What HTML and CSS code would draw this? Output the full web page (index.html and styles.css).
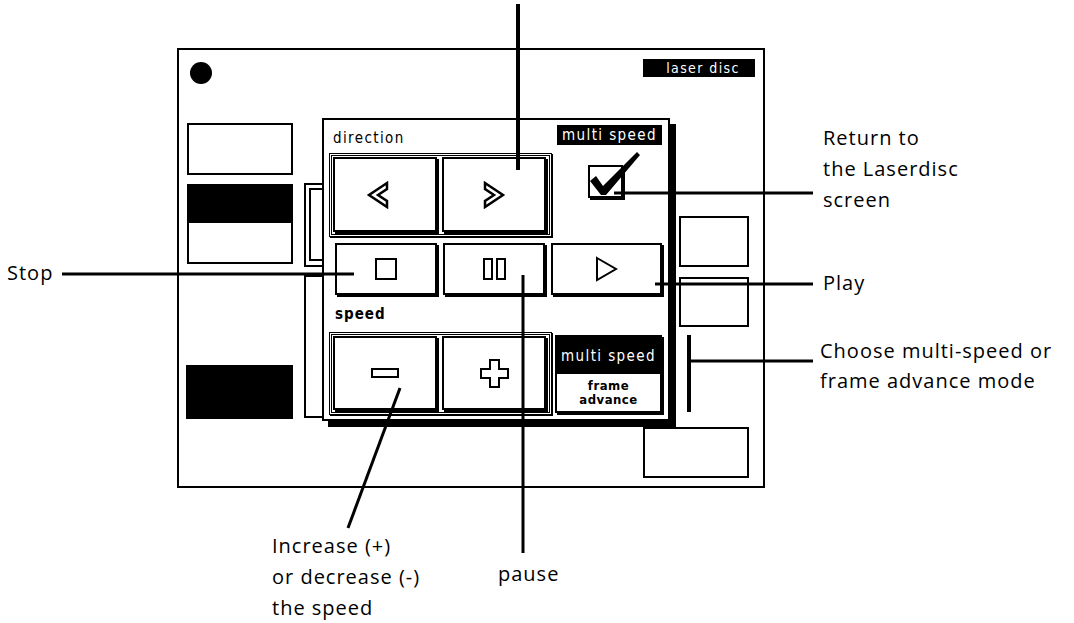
FILE: index.html
```html
<!DOCTYPE html>
<html lang="en">
<head>
    <meta charset="UTF-8">
    <title>Laserdisc controls</title>
    <link rel="stylesheet" href="styles.css">
</head>
<body>
    <div class="figure">
        <div class="screen">
            <div class="dot"></div>
            <div class="tag">laser disc</div>

            <div class="slot slot-a"></div>
            <div class="slot slot-b"></div>
            <div class="slot slot-c"></div>
            <div class="slot slot-d"></div>
            <div class="slot slot-e"></div>
            <div class="slot slot-f"></div>

            <div class="backwin backwin-upper"><div class="backwin-inner"></div></div>
            <div class="backwin backwin-lower"></div>

            <div class="panel">
                <div class="panel-head">
                    <span class="caption">direction</span>
                    <span class="badge">multi speed</span>
                </div>

                <div class="panel-row">
                    <div class="group">
                        <div class="key">
                            <svg class="icon-back" width="24" height="28" viewBox="0 0 24 28"><path d="M21 2 L3 14 L21 26 L21 20 L12 14 L21 8 Z" fill="#fff" stroke="#000" stroke-width="2.5"/></svg>
                        </div>
                        <div class="key">
                            <svg width="24" height="28" viewBox="0 0 24 28"><path d="M3 2 L21 14 L3 26 L3 20 L12 14 L3 8 Z" fill="#fff" stroke="#000" stroke-width="2.5"/></svg>
                        </div>
                    </div>
                    <div class="check-cell">
                        <div class="checkbox">
                            <svg class="checkmark" width="56" height="50" viewBox="0 -15 56 50"><polygon points="2,16 8,11 15,21 49,-13 52,-10 18,30 13,30" fill="#000"/></svg>
                        </div>
                    </div>
                </div>

                <div class="transport">
                    <div class="key">
                        <svg width="22" height="22" viewBox="0 0 22 22"><rect x="1" y="1" width="20" height="20" fill="none" stroke="#000" stroke-width="2"/></svg>
                    </div>
                    <div class="key">
                        <svg width="23" height="22" viewBox="0 0 23 22"><rect x="1" y="1" width="8" height="20" fill="none" stroke="#000" stroke-width="2"/><rect x="14" y="1" width="8" height="20" fill="none" stroke="#000" stroke-width="2"/></svg>
                    </div>
                    <div class="key key-wide">
                        <svg width="23" height="26" viewBox="0 0 23 26"><path d="M2 2 L21 13 L2 24 Z" fill="none" stroke="#000" stroke-width="2"/></svg>
                    </div>
                </div>

                <div class="speed-caption">speed</div>

                <div class="panel-row">
                    <div class="group group-speed">
                        <div class="key">
                            <svg width="28" height="10" viewBox="0 0 28 10"><rect x="1" y="1" width="26" height="8" fill="none" stroke="#000" stroke-width="2"/></svg>
                        </div>
                        <div class="key">
                            <svg width="29" height="29" viewBox="0 0 29 29"><path d="M10 1 H19 V10 H28 V19 H19 V28 H10 V19 H1 V10 H10 Z" fill="none" stroke="#000" stroke-width="2"/></svg>
                        </div>
                    </div>
                    <div class="mode">
                        <div class="mode-on">multi speed</div>
                        <div class="mode-off">frame<br>advance</div>
                    </div>
                </div>
            </div>
        </div>

        <svg class="leaders" width="1074" height="623" viewBox="0 0 1074 623">
            <g stroke="#000" fill="none">
                <path d="M518 4 V170" stroke-width="4"/>
                <path d="M614 193 H813" stroke-width="3"/>
                <path d="M62 274 H354" stroke-width="3"/>
                <path d="M655 284 H813" stroke-width="3"/>
                <path d="M689 335 V412" stroke-width="4"/>
                <path d="M690 361 H813" stroke-width="3"/>
                <path d="M523 275 V553" stroke-width="3"/>
                <path d="M400 388 L348 528" stroke-width="3"/>
            </g>
        </svg>

        <div class="note note-stop">Stop</div>
        <div class="note note-return">Return to<br>the Laserdisc<br>screen</div>
        <div class="note note-play">Play</div>
        <div class="note note-mode">Choose multi-speed or<br>frame advance mode</div>
        <div class="note note-speed">Increase (+)<br>or decrease (-)<br>the speed</div>
        <div class="note note-pause">pause</div>
    </div>
</body>
</html>
```

FILE: styles.css
```css
body {
    margin: 0;
    background-color: #fff;
}
.figure {
    position: relative;
    width: 1074px;
    height: 623px;
    overflow: hidden;
    color: #000;
    font-family: "Open Sans", "DejaVu Sans", sans-serif;
}
.screen {
    position: relative;
    box-sizing: border-box;
    width: 588px;
    height: 440px;
    margin: 48px 0 0 177px;
    border: 2px solid #000;
    font-family: "DejaVu Sans Condensed", "DejaVu Sans Mono", monospace;
    font-size: 15px;
    letter-spacing: 1.4px;
}
.dot {
    position: absolute;
    left: 11px;
    top: 12px;
    width: 22px;
    height: 22px;
    border-radius: 50%;
    background-color: #000;
}
.tag {
    position: absolute;
    left: 464px;
    top: 9px;
    width: 112px;
    height: 18px;
    box-sizing: border-box;
    padding-left: 8px;
    background-color: #000;
    color: #fff;
    font-size: 14px;
    line-height: 18px;
    text-align: center;
}
.slot {
    position: absolute;
    box-sizing: border-box;
    border: 2px solid #000;
    background-color: #fff;
}
.slot-a { left: 8px; top: 73px; width: 106px; height: 52px; }
.slot-b { left: 8px; top: 134px; width: 106px; height: 80px; background: linear-gradient(#000 0 37px, #fff 37px); }
.slot-c { left: 7px; top: 315px; width: 107px; height: 54px; background-color: #000; }
.slot-d { left: 500px; top: 166px; width: 70px; height: 51px; }
.slot-e { left: 500px; top: 227px; width: 70px; height: 50px; }
.slot-f { left: 464px; top: 377px; width: 106px; height: 51px; }
.backwin {
    position: absolute;
    box-sizing: border-box;
    left: 125px;
    width: 50px;
    border: 2px solid #000;
    background-color: #fff;
}
.backwin-upper {
    top: 133px;
    height: 84px;
    padding: 3px 0 4px 3px;
}
.backwin-inner {
    height: 100%;
    box-sizing: border-box;
    border: 2px solid #000;
}
.backwin-lower {
    top: 225px;
    height: 143px;
}
.panel {
    position: absolute;
    left: 143px;
    top: 68px;
    width: 348px;
    height: 303px;
    box-sizing: border-box;
    padding: 5px 6px 0 5px;
    border: 2px solid #000;
    box-shadow: 6px 6px 0 #000;
    background-color: #fff;
    display: flex;
    flex-direction: column;
}
.panel-head {
    display: flex;
    justify-content: space-between;
    height: 28px;
}
.caption {
    margin: 5px 0 0 4px;
    line-height: 16px;
}
.badge {
    width: 105px;
    height: 20px;
    line-height: 20px;
    text-align: center;
    background-color: #000;
    color: #fff;
}
.panel-row {
    display: flex;
}
.group {
    display: flex;
    gap: 5px;
    padding: 1px 3px 2px 1px;
    border: 3px double #000;
    box-shadow: 1px 1px 0 #000;
}
.key {
    box-sizing: border-box;
    width: 104px;
    height: 75px;
    border: 2px solid #000;
    box-shadow: 2px 2px 0 #000;
    background-color: #fff;
    display: flex;
    align-items: center;
    justify-content: center;
}
.icon-back {
    margin-right: 14px;
}
.group-speed .key {
    height: 74px;
}
.check-cell {
    flex: 1;
}
.checkbox {
    position: relative;
    box-sizing: border-box;
    width: 35px;
    height: 33px;
    margin: 12px 0 0 36px;
    border: 2px solid #000;
    box-shadow: 2px 2px 0 #000;
}
.checkmark {
    position: absolute;
    left: -2px;
    top: -17px;
    overflow: visible;
}
.transport {
    display: flex;
    gap: 6px;
    margin: 6px 0 0 6px;
}
.transport .key {
    width: 102px;
    height: 52px;
}
.transport .key-wide {
    width: 111px;
}
.speed-caption {
    height: 37px;
    box-sizing: border-box;
    padding: 11px 0 0 6px;
    font-weight: bold;
    line-height: 16px;
    letter-spacing: 1px;
}
.mode {
    box-sizing: border-box;
    width: 107px;
    height: 78px;
    margin: 3px 0 0 3px;
    border: 2px solid #000;
    box-shadow: 2px 2px 0 #000;
    display: flex;
    flex-direction: column;
}
.mode-on {
    height: 37px;
    background-color: #000;
    color: #fff;
    display: flex;
    align-items: center;
    justify-content: center;
}
.mode-off {
    flex: 1;
    display: flex;
    align-items: center;
    justify-content: center;
    text-align: center;
    font-size: 13px;
    line-height: 14px;
    font-weight: bold;
    letter-spacing: 0.5px;
}
.leaders {
    position: absolute;
    left: 0;
    top: 0;
    pointer-events: none;
}
.note {
    position: absolute;
    font-size: 20px;
    letter-spacing: 1px;
    line-height: 31px;
    white-space: nowrap;
}
.note-stop { left: 7px; top: 257px; }
.note-return { left: 823px; top: 122px; }
.note-play { left: 823px; top: 267px; }
.note-mode { left: 820px; top: 336px; line-height: 30px; }
.note-speed { left: 272px; top: 530px; }
.note-pause { left: 498px; top: 558px; }
```
